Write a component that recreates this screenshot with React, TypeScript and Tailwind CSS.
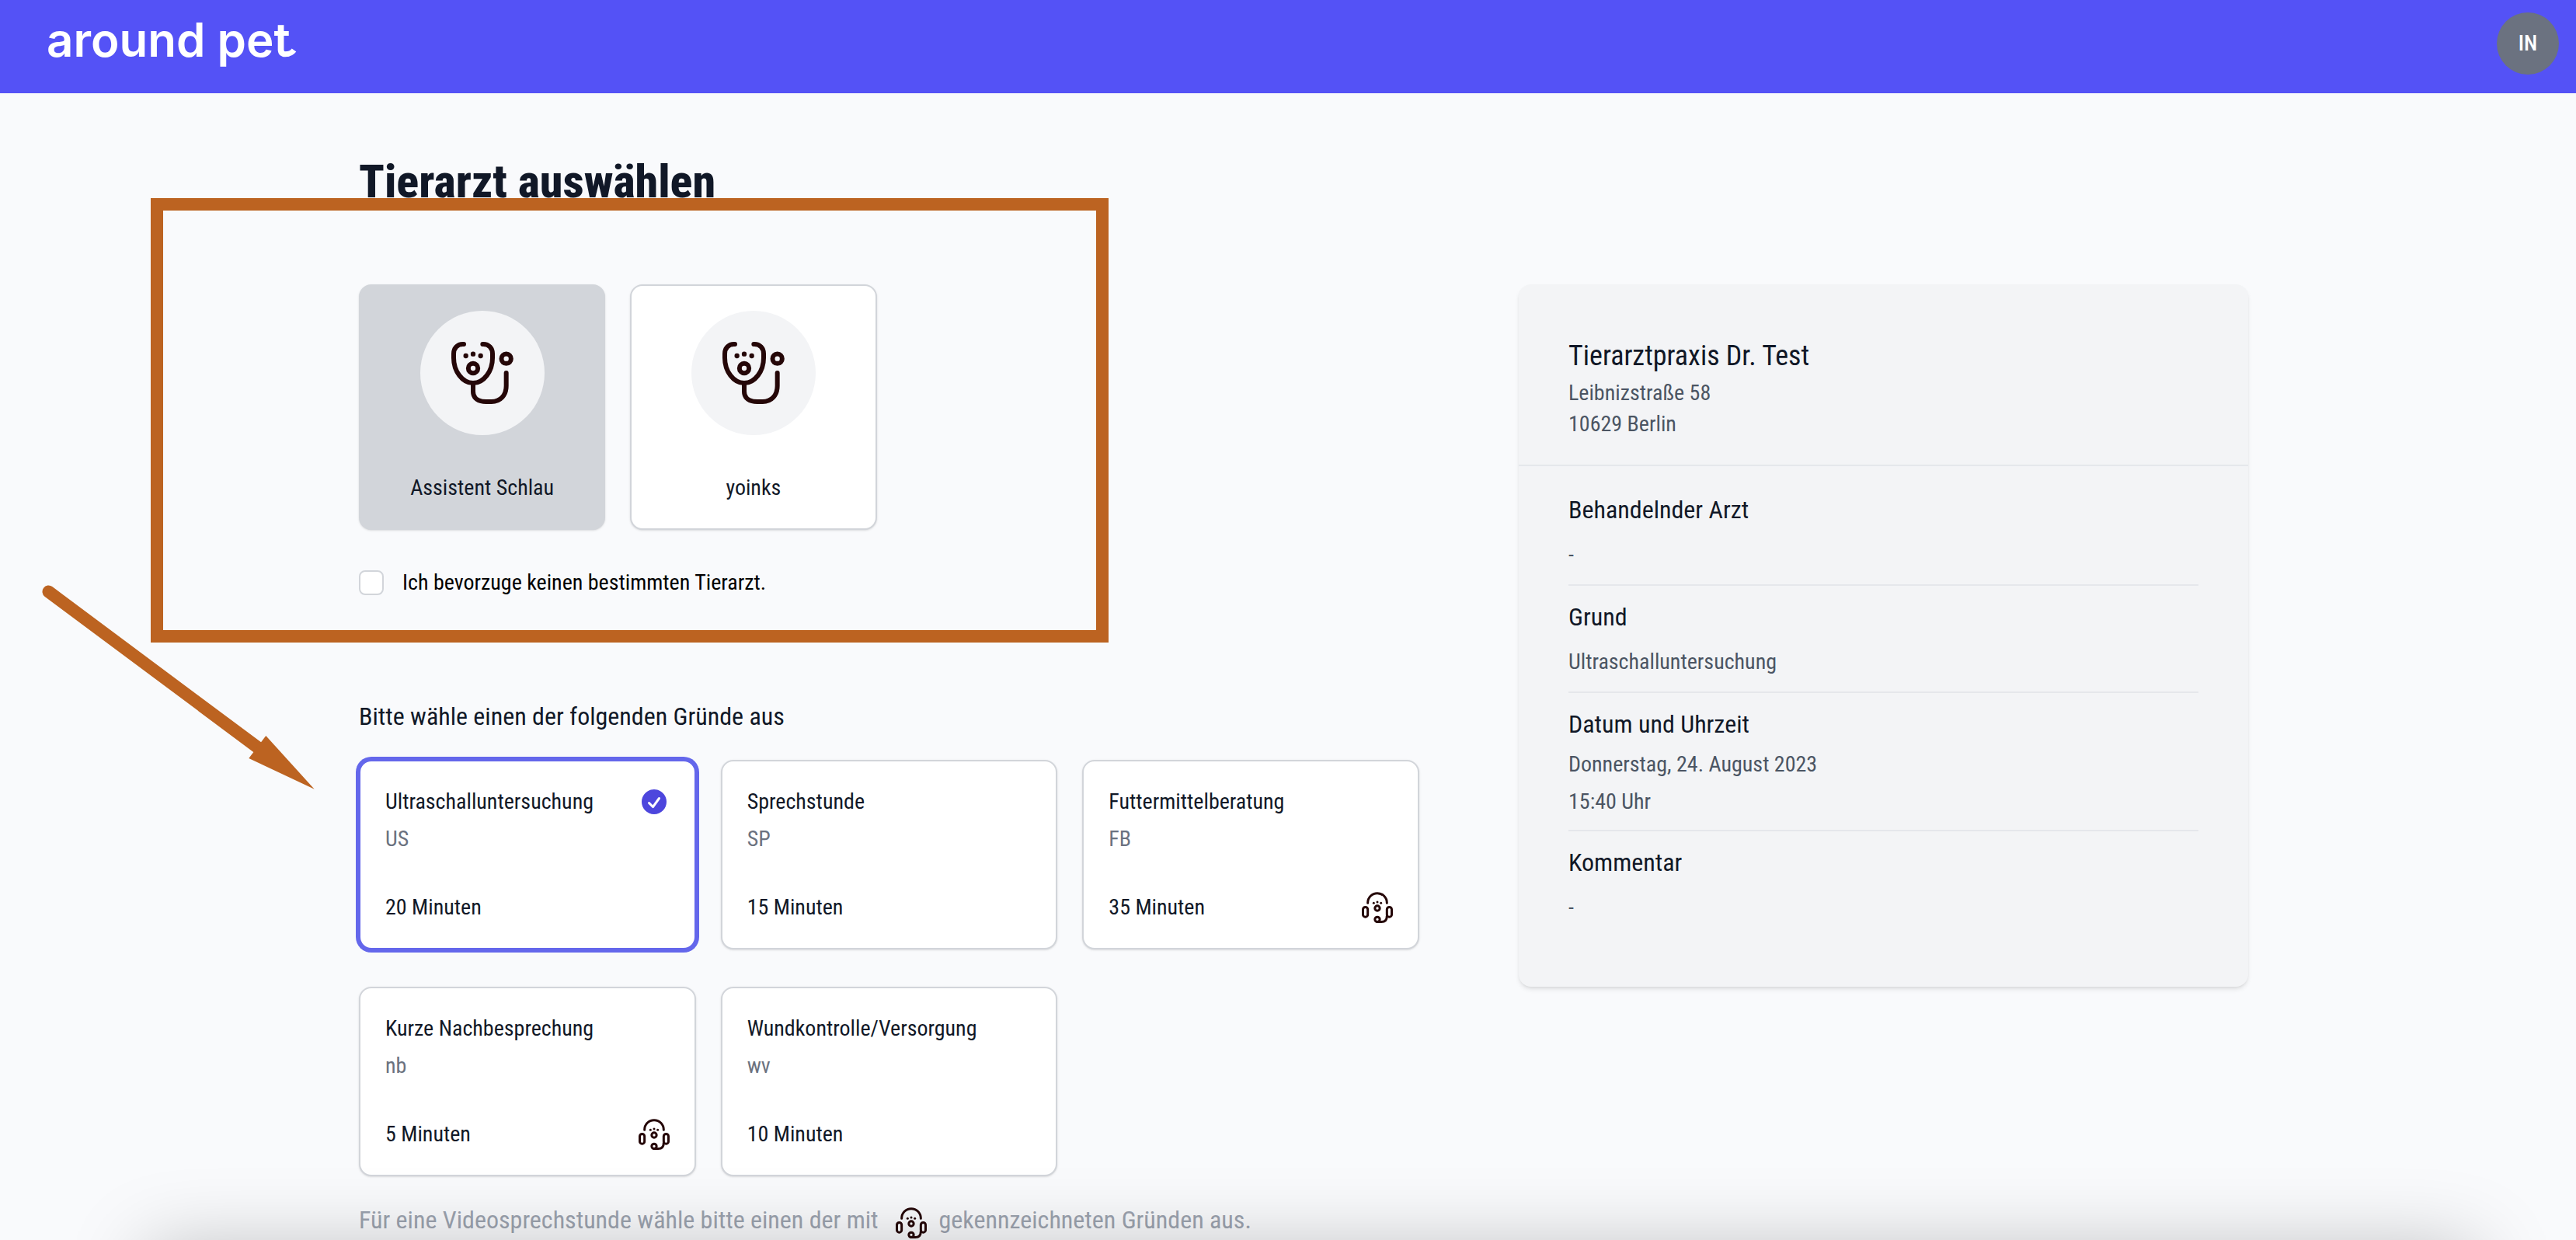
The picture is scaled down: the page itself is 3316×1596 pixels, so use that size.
import { useState } from "react";

type Reason = { title: string; code: string; minutes: number; video?: boolean };

const doctors = ["Assistent Schlau", "yoinks"];

const reasons: Reason[] = [
  { title: "Ultraschalluntersuchung", code: "US", minutes: 20 },
  { title: "Sprechstunde", code: "SP", minutes: 15 },
  { title: "Futtermittelberatung", code: "FB", minutes: 35, video: true },
  { title: "Kurze Nachbesprechung", code: "nb", minutes: 5, video: true },
  { title: "Wundkontrolle/Versorgung", code: "wv", minutes: 10 },
];

const summary = [
  { label: "Behandelnder Arzt", lines: ["-"] },
  { label: "Grund", lines: ["Ultraschalluntersuchung"] },
  { label: "Datum und Uhrzeit", lines: ["Donnerstag, 24. August 2023", "15:40 Uhr"] },
  { label: "Kommentar", lines: ["-"] },
];

function StethoscopeIcon() {
  return (
    <svg viewBox="0 0 240 240" className="size-20" fill="none" stroke="#250708" strokeWidth="18" strokeLinecap="round" aria-hidden="true">
      <path d="M48 9H44C24 9 9 24 9 46V62C9 112 42 159 84 159S159 112 159 62V46C159 24 144 9 124 9H121" />
      <path d="M84 159V192C84 218 105 231 135 231H155C190 231 212 205 212 170V120" />
      <circle cx="84" cy="102" r="18.5" />
      <circle cx="212" cy="65" r="18.5" />
      <g fill="#250708" stroke="none">
        <circle cx="56" cy="54" r="9.5" />
        <circle cx="84" cy="47" r="9.5" />
        <circle cx="113" cy="54" r="9.5" />
      </g>
    </svg>
  );
}

function HeadsetIcon() {
  return (
    <svg viewBox="0 0 120 120" className="size-10 shrink-0" fill="none" stroke="#250708" strokeWidth="9" strokeLinecap="round" role="img" aria-label="Videosprechstunde">
      <path d="M23 43V42A37 37 0 0 1 97 42V43" />
      <rect x="4.5" y="58.5" width="18.5" height="38" rx="9" />
      <rect x="97" y="58.5" width="18.5" height="38" rx="9" />
      <circle cx="60" cy="63" r="9.5" />
      <circle cx="60" cy="106" r="9.5" />
      <path d="M97 92C97 107 90 115.5 76 115.5H60" />
      <g fill="#250708" stroke="none">
        <circle cx="46" cy="43" r="4.5" />
        <circle cx="60" cy="39" r="4.5" />
        <circle cx="74" cy="43" r="4.5" />
      </g>
    </svg>
  );
}

function CheckIcon() {
  return (
    <svg viewBox="0 0 20 20" className="size-10 shrink-0" fill="#4d46dd" aria-hidden="true">
      <path
        fillRule="evenodd"
        clipRule="evenodd"
        d="M10 18a8 8 0 100-16 8 8 0 000 16zm3.857-9.809a.75.75 0 00-1.214-.882l-3.483 4.79-1.88-1.88a.75.75 0 10-1.06 1.061l2.5 2.5a.75.75 0 001.137-.089l4-5.5z"
      />
    </svg>
  );
}

function Highlight() {
  return (
    <>
      <div className="pointer-events-none absolute -top-[111px] -left-[268px] z-10 h-[572px] w-[1233px] border-[16px] border-[#bc6321]" />
      <svg viewBox="0 0 360 270" className="pointer-events-none absolute top-[386px] -left-[412px] z-10 h-[270px] w-[360px]" aria-hidden="true">
        <path d="M12.5 9.5L283 211" stroke="#bc6321" strokeWidth="16" strokeLinecap="round" />
        <path d="M292.3 195L270.3 224L354.7 263.7Z" fill="#bc6321" />
      </svg>
    </>
  );
}

export default function App() {
  const [doctor, setDoctor] = useState(0);
  const [reason, setReason] = useState(0);

  return (
    <div className="min-h-screen overflow-hidden bg-[#f9fafc] font-['Roboto_Condensed','Roboto',sans-serif] text-[28px] leading-10 text-[#111827]">
      <header className="flex h-[120px] items-start justify-between bg-[#5452f6] pr-[22px] pl-[60px]">
        <a href="#" className="relative mt-4 font-['Inter',sans-serif] text-[60px] leading-[70px] font-semibold text-white">
          around pet
          <svg viewBox="0 0 20 16" className="absolute top-[43px] -right-2 h-4 w-5" fill="none" stroke="currentColor" strokeWidth="7" aria-hidden="true">
            <path d="M2 10.500C9 11.500 13.500 9.500 16.500 5.500" />
          </svg>
        </a>
        <button type="button" className="mt-4 size-20 rounded-full bg-[#6b7280] font-medium text-white">
          IN
        </button>
      </header>

      <main className="mx-auto max-w-[2472px] pt-20 pl-10">
        <h1 className="text-[60px] leading-[68px] font-extrabold">Tierarzt auswählen</h1>

        <div className="mt-[98px] grid grid-cols-[minmax(0,1fr)_939px] items-start gap-32">
          <div>
            <section className="relative">
              <Highlight />
              <div className="grid grid-cols-4 gap-8">
                {doctors.map((name, i) => (
                  <button
                    key={name}
                    type="button"
                    onClick={() => setDoctor(i)}
                    className={
                      "flex h-[316px] flex-col items-center rounded-2xl border-2 border-[#d2d5da] pt-8 shadow-sm " +
                      (i === doctor ? "bg-[#d2d5da]" : "bg-white")
                    }
                  >
                    <span className="flex size-40 items-center justify-center rounded-full bg-[#f3f4f6]">
                      <StethoscopeIcon />
                    </span>
                    <span className="mt-12">{name}</span>
                  </button>
                ))}
              </div>
              <label className="mt-12 flex w-fit items-center gap-6 text-black">
                <input
                  type="checkbox"
                  className="size-8 appearance-none rounded-lg border-2 border-[#d2d5da] bg-white checked:bg-[#4d46dd]"
                />
                Ich bevorzuge keinen bestimmten Tierarzt.
              </label>
            </section>

            <section className="mt-32">
              <h2 className="text-[32px] leading-[48px]">Bitte wähle einen der folgenden Gründe aus</h2>
              <div className="mt-8 grid grid-cols-3 gap-x-8 gap-y-12">
                {reasons.map((r, i) => (
                  <button
                    key={r.code}
                    type="button"
                    onClick={() => setReason(i)}
                    className={
                      "rounded-2xl border-2 bg-white p-8 text-left " +
                      (i === reason ? "border-[#6467eb] ring-4 ring-[#6467eb]" : "border-[#d2d5da] shadow-sm")
                    }
                  >
                    <span className="flex justify-between">
                      {r.title}
                      {i === reason && <CheckIcon />}
                    </span>
                    <span className="mt-2 block text-[#6b7280]">{r.code}</span>
                    <span className="mt-12 flex justify-between">
                      {r.minutes} Minuten
                      {r.video && <HeadsetIcon />}
                    </span>
                  </button>
                ))}
              </div>
              <p className="mt-8 flex items-end text-[32px] leading-[48px] text-[#9ca3af]">
                Für eine Videosprechstunde wähle bitte einen der mit
                <span className="mr-4 ml-[22px]">
                  <HeadsetIcon />
                </span>
                gekennzeichneten Gründen aus.
              </p>
            </section>
          </div>

          <aside className="rounded-2xl bg-[#f3f4f6] pb-16 shadow-md">
            <div className="border-b-2 border-[#e5e7eb] px-16 pt-16 pb-8">
              <h2 className="text-[36px] leading-[56px]">Tierarztpraxis Dr. Test</h2>
              <address className="text-[#4b5563] not-italic">
                Leibnizstraße 58
                <br />
                10629 Berlin
              </address>
            </div>
            <dl className="mx-16 divide-y-2 divide-[#e5e7eb] pt-4">
              {summary.map((item) => (
                <div key={item.label} className="pt-4">
                  <dt className="text-[32px] leading-[48px]">{item.label}</dt>
                  <dd
                    className={
                      "flex flex-col gap-2 text-[#4b5563] " + (item.lines.length > 1 ? "pt-2 pb-4" : "pt-[14px] pb-[18px]")
                    }
                  >
                    {item.lines.map((line) => (
                      <span key={line}>{line}</span>
                    ))}
                  </dd>
                </div>
              ))}
            </dl>
          </aside>
        </div>
      </main>

      <div className="pointer-events-none fixed right-[130px] -bottom-[112px] left-[190px] z-20 h-[100px] shadow-[0_0_100px_rgba(0,0,0,0.25)]" />
    </div>
  );
}
